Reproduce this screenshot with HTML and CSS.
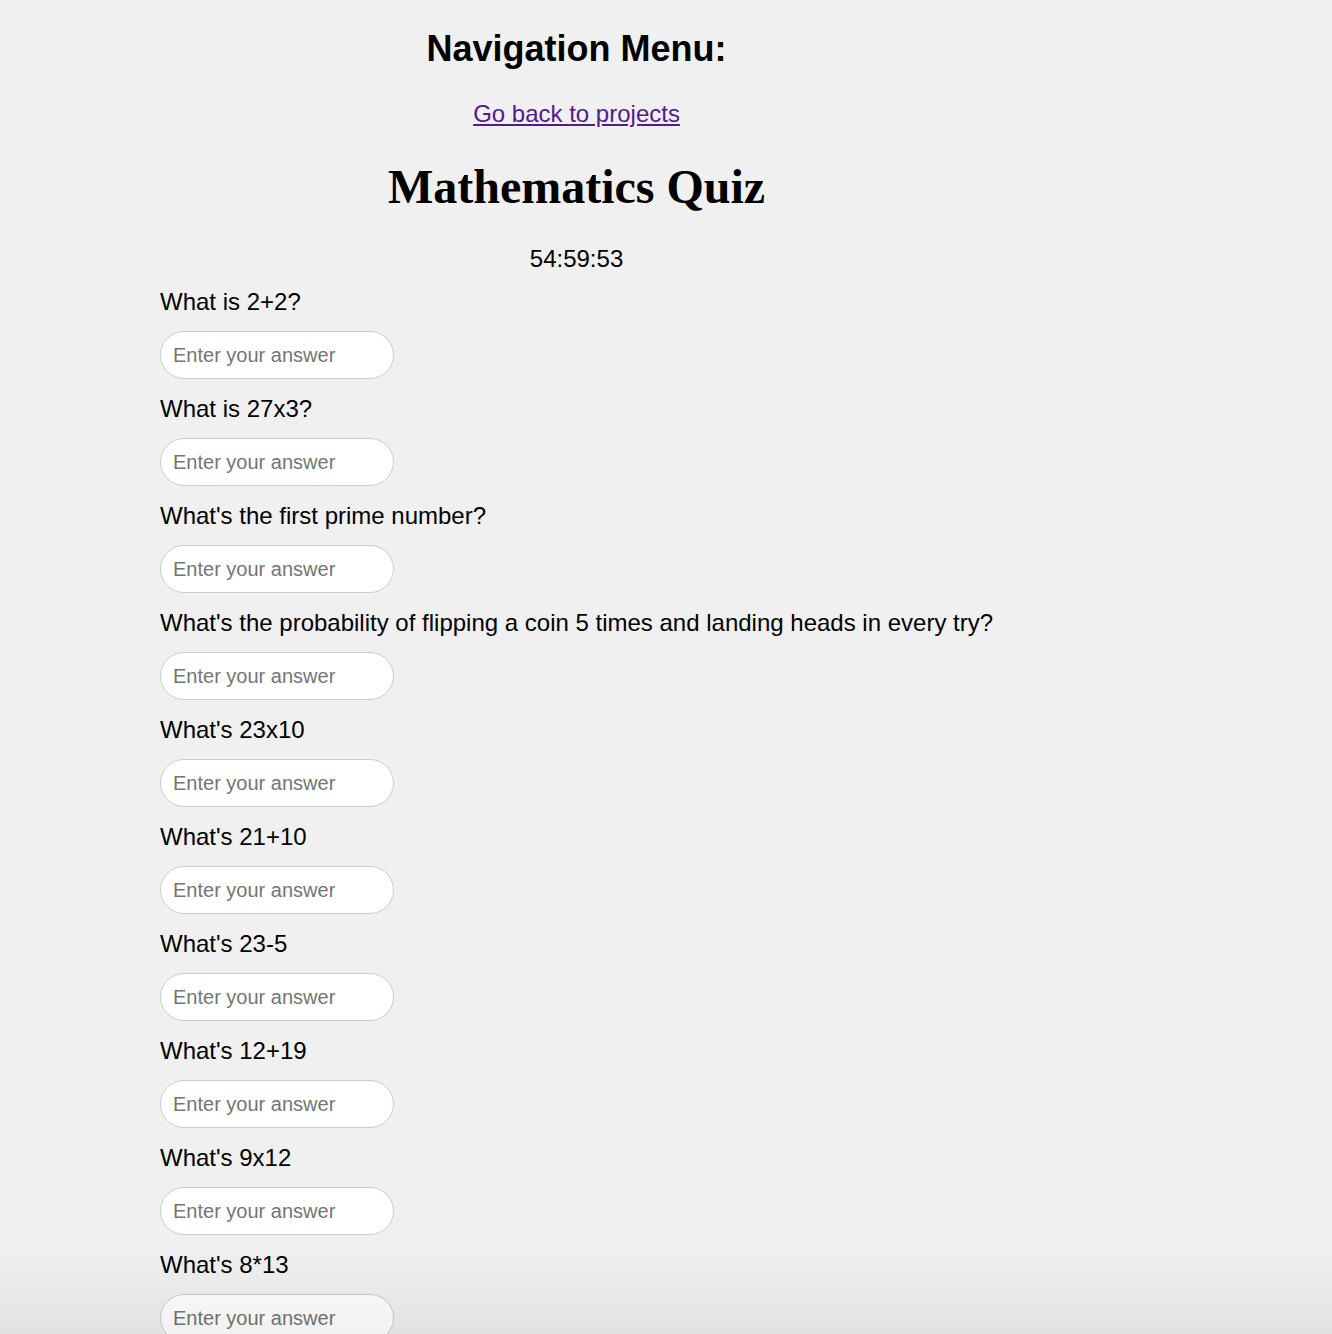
FILE: index.html
```html
<!DOCTYPE html>
<html lang="en">
<head>
<meta charset="utf-8">
<title>Mathematics Quiz</title>
<link rel="stylesheet" href="styles.css">
</head>
<body>
<div class="page">
  <nav class="nav">
    <h2 class="nav-title">Navigation Menu:</h2>
    <a class="nav-link" href="#">Go back to projects</a>
  </nav>
  <h1 class="quiz-title">Mathematics Quiz</h1>
  <div class="timer">54:59:53</div>
  <form class="quiz">
    <div class="question"><label class="q-label">What is 2+2?</label><input class="q-input" type="text" placeholder="Enter your answer"></div>
    <div class="question"><label class="q-label">What is 27x3?</label><input class="q-input" type="text" placeholder="Enter your answer"></div>
    <div class="question"><label class="q-label">What's the first prime number?</label><input class="q-input" type="text" placeholder="Enter your answer"></div>
    <div class="question"><label class="q-label">What's the probability of flipping a coin 5 times and landing heads in every try?</label><input class="q-input" type="text" placeholder="Enter your answer"></div>
    <div class="question"><label class="q-label">What's 23x10</label><input class="q-input" type="text" placeholder="Enter your answer"></div>
    <div class="question"><label class="q-label">What's 21+10</label><input class="q-input" type="text" placeholder="Enter your answer"></div>
    <div class="question"><label class="q-label">What's 23-5</label><input class="q-input" type="text" placeholder="Enter your answer"></div>
    <div class="question"><label class="q-label">What's 12+19</label><input class="q-input" type="text" placeholder="Enter your answer"></div>
    <div class="question"><label class="q-label">What's 9x12</label><input class="q-input" type="text" placeholder="Enter your answer"></div>
    <div class="question"><label class="q-label">What's 8*13</label><input class="q-input" type="text" placeholder="Enter your answer"></div>
  </form>
</div>
<div class="bottom-shade"></div>
</body>
</html>
```
FILE: styles.css
```css
html, body {
  margin: 0;
  padding: 0;
}
body {
  background: #f0f0f0;
  font-family: "Liberation Sans", Arial, Helvetica, sans-serif;
  font-size: 24px;
  color: #000;
}
.page {
  width: fit-content;
  margin-left: 160px;
  display: flex;
  flex-direction: column;
  align-items: stretch;
}
.nav {
  display: flex;
  flex-direction: column;
  align-items: center;
  padding-top: 28px;
}
.nav-title {
  margin: 0;
  font-size: 36px;
  font-weight: bold;
  line-height: 41px;
}
.nav-link {
  margin-top: 31px;
  color: #551a8b;
  text-decoration: underline;
  line-height: 28px;
}
.quiz-title {
  margin: 31px 0 0;
  font-family: "Liberation Serif", "Times New Roman", serif;
  font-size: 48px;
  font-weight: bold;
  text-align: center;
  line-height: 55px;
}
.timer {
  margin-top: 31px;
  text-align: center;
  line-height: 28px;
}
.quiz {
  display: flex;
  flex-direction: column;
  margin-top: 15px;
}
.question {
  display: flex;
  flex-direction: column;
  align-items: flex-start;
  gap: 15px;
  margin-bottom: 16px;
}
.q-label {
  line-height: 28px;
}
.q-input {
  box-sizing: border-box;
  width: 234px;
  height: 48px;
  padding: 0 12px;
  border: 1px solid #cccccc;
  border-radius: 24px;
  background: #ffffff;
  font-family: "Liberation Sans", Arial, Helvetica, sans-serif;
  font-size: 20px;
  color: #000;
  outline: none;
}
.q-input::placeholder {
  color: #757575;
}
.bottom-shade {
  position: fixed;
  left: 0;
  right: 0;
  bottom: 0;
  height: 90px;
  background: linear-gradient(to bottom, rgba(0,0,0,0) 0%, rgba(0,0,0,0.055) 100%);
  pointer-events: none;
}
```
